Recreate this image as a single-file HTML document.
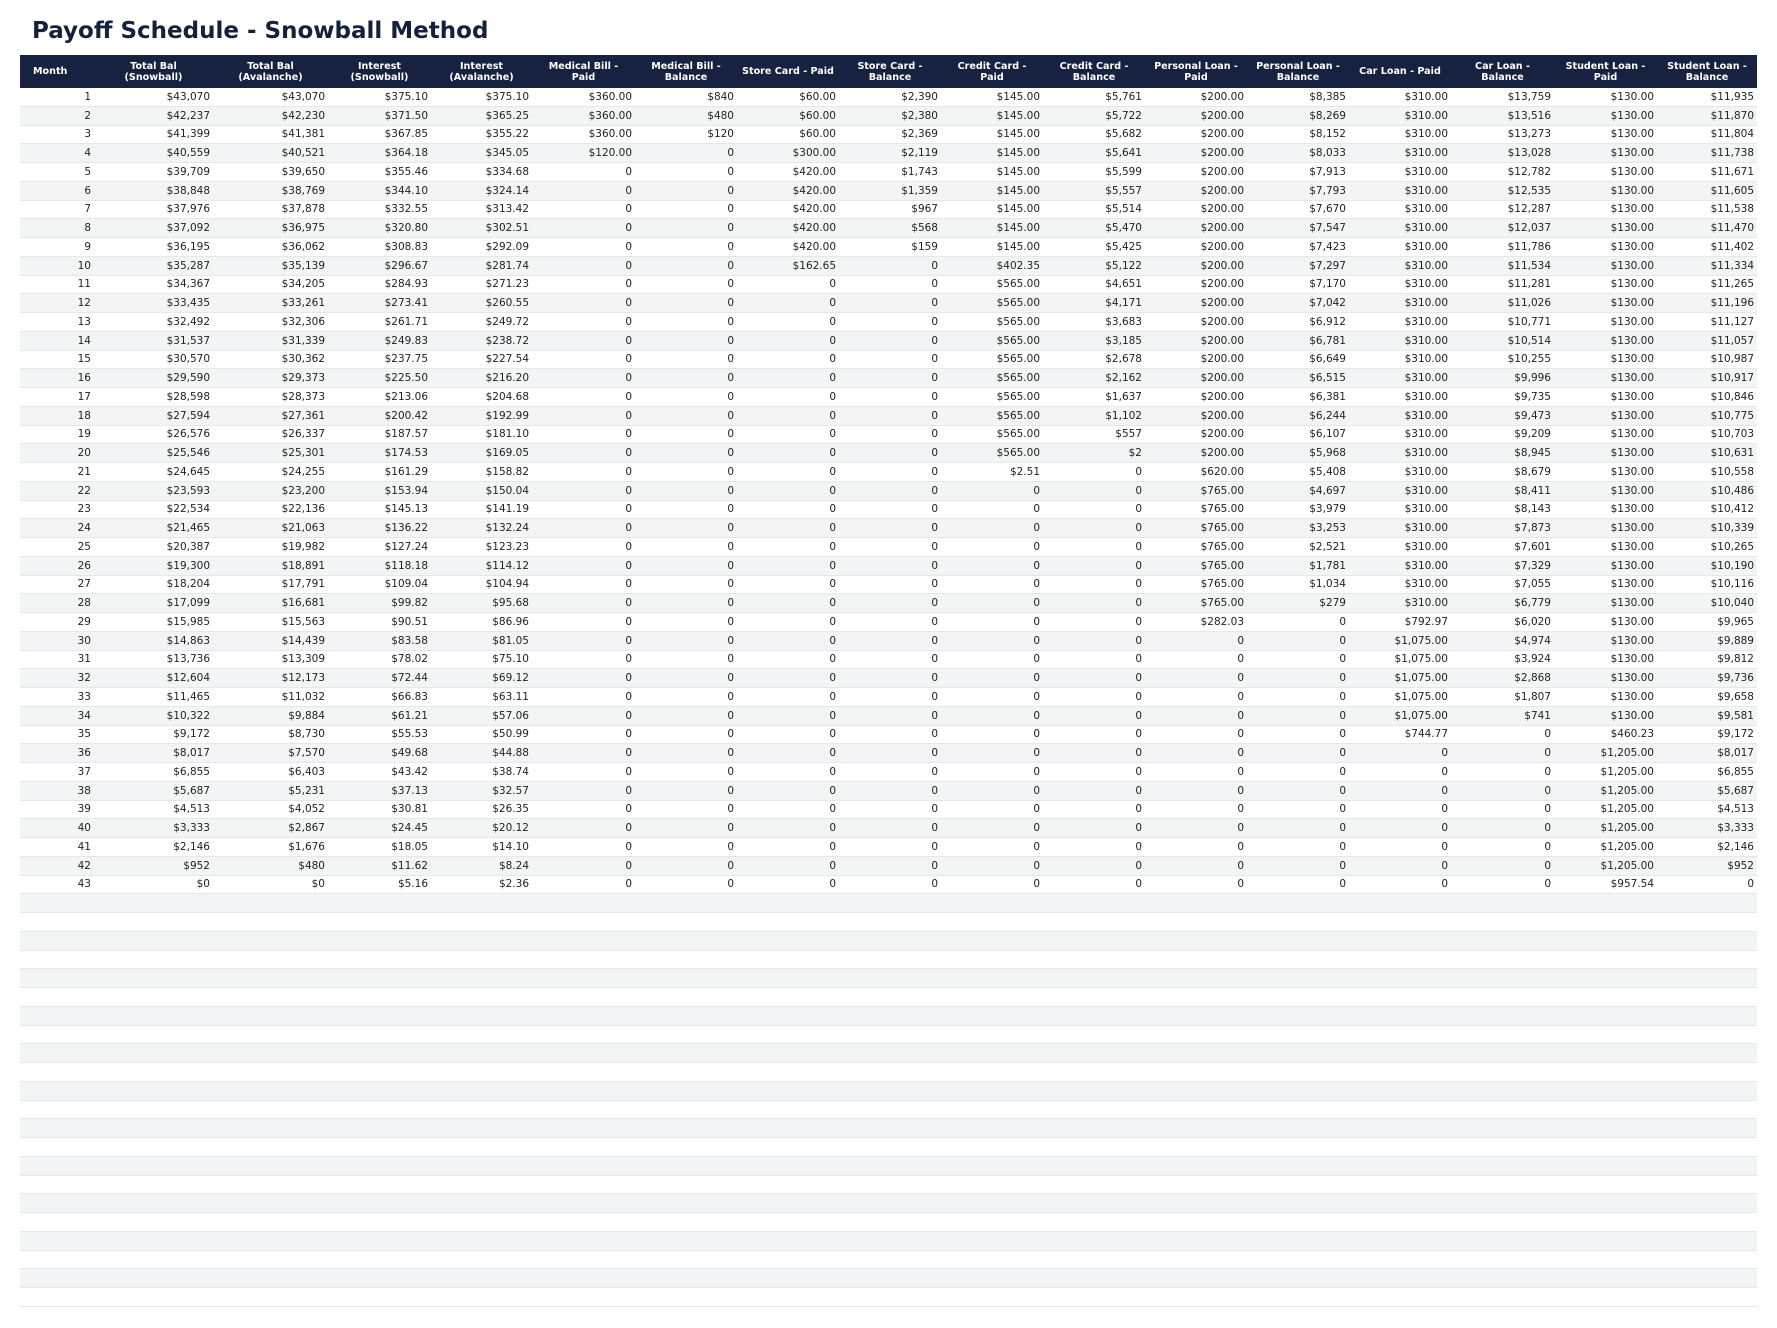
<!DOCTYPE html>
<html><head><meta charset="utf-8"><style>
body{margin:0;background:#fff;font-family:"DejaVu Sans","Liberation Sans",sans-serif;}
h1{position:absolute;left:32px;top:18px;margin:0;font-size:23px;font-weight:bold;color:#14213d;}
table{position:absolute;left:20px;top:55px;width:1737px;border-collapse:collapse;table-layout:fixed;}
th{background:#16223f;color:#fff;font-size:9.6px;font-weight:bold;height:33px;padding:0 2px;text-align:center;line-height:11px;}
th.m{text-align:left;padding-left:13px;}
td{font-size:10.5px;color:#222;text-align:right;padding:0 3px 0 0;height:17.75px;border-bottom:1px solid #e5e7eb;white-space:nowrap;overflow:hidden;}
tbody tr:nth-child(even) td{background:#f3f4f6;}
</style></head><body>
<h1>Payoff Schedule - Snowball Method</h1>
<table>
<colgroup><col style="width:74px"><col style="width:119px"><col style="width:115px"><col style="width:103px"><col style="width:101px"><col style="width:103px"><col style="width:102px"><col style="width:102px"><col style="width:102px"><col style="width:102px"><col style="width:102px"><col style="width:102px"><col style="width:102px"><col style="width:102px"><col style="width:103px"><col style="width:103px"></colgroup>
<thead><tr><th class="m">Month</th><th>Total Bal<br>(Snowball)</th><th>Total Bal<br>(Avalanche)</th><th>Interest<br>(Snowball)</th><th>Interest<br>(Avalanche)</th><th>Medical Bill -<br>Paid</th><th>Medical Bill -<br>Balance</th><th>Store Card - Paid</th><th>Store Card -<br>Balance</th><th>Credit Card -<br>Paid</th><th>Credit Card -<br>Balance</th><th>Personal Loan -<br>Paid</th><th>Personal Loan -<br>Balance</th><th>Car Loan - Paid</th><th>Car Loan -<br>Balance</th><th>Student Loan -<br>Paid</th><th>Student Loan -<br>Balance</th></tr></thead>
<tbody>
<tr><td>1</td><td>$43,070</td><td>$43,070</td><td>$375.10</td><td>$375.10</td><td>$360.00</td><td>$840</td><td>$60.00</td><td>$2,390</td><td>$145.00</td><td>$5,761</td><td>$200.00</td><td>$8,385</td><td>$310.00</td><td>$13,759</td><td>$130.00</td><td>$11,935</td></tr>
<tr><td>2</td><td>$42,237</td><td>$42,230</td><td>$371.50</td><td>$365.25</td><td>$360.00</td><td>$480</td><td>$60.00</td><td>$2,380</td><td>$145.00</td><td>$5,722</td><td>$200.00</td><td>$8,269</td><td>$310.00</td><td>$13,516</td><td>$130.00</td><td>$11,870</td></tr>
<tr><td>3</td><td>$41,399</td><td>$41,381</td><td>$367.85</td><td>$355.22</td><td>$360.00</td><td>$120</td><td>$60.00</td><td>$2,369</td><td>$145.00</td><td>$5,682</td><td>$200.00</td><td>$8,152</td><td>$310.00</td><td>$13,273</td><td>$130.00</td><td>$11,804</td></tr>
<tr><td>4</td><td>$40,559</td><td>$40,521</td><td>$364.18</td><td>$345.05</td><td>$120.00</td><td>0</td><td>$300.00</td><td>$2,119</td><td>$145.00</td><td>$5,641</td><td>$200.00</td><td>$8,033</td><td>$310.00</td><td>$13,028</td><td>$130.00</td><td>$11,738</td></tr>
<tr><td>5</td><td>$39,709</td><td>$39,650</td><td>$355.46</td><td>$334.68</td><td>0</td><td>0</td><td>$420.00</td><td>$1,743</td><td>$145.00</td><td>$5,599</td><td>$200.00</td><td>$7,913</td><td>$310.00</td><td>$12,782</td><td>$130.00</td><td>$11,671</td></tr>
<tr><td>6</td><td>$38,848</td><td>$38,769</td><td>$344.10</td><td>$324.14</td><td>0</td><td>0</td><td>$420.00</td><td>$1,359</td><td>$145.00</td><td>$5,557</td><td>$200.00</td><td>$7,793</td><td>$310.00</td><td>$12,535</td><td>$130.00</td><td>$11,605</td></tr>
<tr><td>7</td><td>$37,976</td><td>$37,878</td><td>$332.55</td><td>$313.42</td><td>0</td><td>0</td><td>$420.00</td><td>$967</td><td>$145.00</td><td>$5,514</td><td>$200.00</td><td>$7,670</td><td>$310.00</td><td>$12,287</td><td>$130.00</td><td>$11,538</td></tr>
<tr><td>8</td><td>$37,092</td><td>$36,975</td><td>$320.80</td><td>$302.51</td><td>0</td><td>0</td><td>$420.00</td><td>$568</td><td>$145.00</td><td>$5,470</td><td>$200.00</td><td>$7,547</td><td>$310.00</td><td>$12,037</td><td>$130.00</td><td>$11,470</td></tr>
<tr><td>9</td><td>$36,195</td><td>$36,062</td><td>$308.83</td><td>$292.09</td><td>0</td><td>0</td><td>$420.00</td><td>$159</td><td>$145.00</td><td>$5,425</td><td>$200.00</td><td>$7,423</td><td>$310.00</td><td>$11,786</td><td>$130.00</td><td>$11,402</td></tr>
<tr><td>10</td><td>$35,287</td><td>$35,139</td><td>$296.67</td><td>$281.74</td><td>0</td><td>0</td><td>$162.65</td><td>0</td><td>$402.35</td><td>$5,122</td><td>$200.00</td><td>$7,297</td><td>$310.00</td><td>$11,534</td><td>$130.00</td><td>$11,334</td></tr>
<tr><td>11</td><td>$34,367</td><td>$34,205</td><td>$284.93</td><td>$271.23</td><td>0</td><td>0</td><td>0</td><td>0</td><td>$565.00</td><td>$4,651</td><td>$200.00</td><td>$7,170</td><td>$310.00</td><td>$11,281</td><td>$130.00</td><td>$11,265</td></tr>
<tr><td>12</td><td>$33,435</td><td>$33,261</td><td>$273.41</td><td>$260.55</td><td>0</td><td>0</td><td>0</td><td>0</td><td>$565.00</td><td>$4,171</td><td>$200.00</td><td>$7,042</td><td>$310.00</td><td>$11,026</td><td>$130.00</td><td>$11,196</td></tr>
<tr><td>13</td><td>$32,492</td><td>$32,306</td><td>$261.71</td><td>$249.72</td><td>0</td><td>0</td><td>0</td><td>0</td><td>$565.00</td><td>$3,683</td><td>$200.00</td><td>$6,912</td><td>$310.00</td><td>$10,771</td><td>$130.00</td><td>$11,127</td></tr>
<tr><td>14</td><td>$31,537</td><td>$31,339</td><td>$249.83</td><td>$238.72</td><td>0</td><td>0</td><td>0</td><td>0</td><td>$565.00</td><td>$3,185</td><td>$200.00</td><td>$6,781</td><td>$310.00</td><td>$10,514</td><td>$130.00</td><td>$11,057</td></tr>
<tr><td>15</td><td>$30,570</td><td>$30,362</td><td>$237.75</td><td>$227.54</td><td>0</td><td>0</td><td>0</td><td>0</td><td>$565.00</td><td>$2,678</td><td>$200.00</td><td>$6,649</td><td>$310.00</td><td>$10,255</td><td>$130.00</td><td>$10,987</td></tr>
<tr><td>16</td><td>$29,590</td><td>$29,373</td><td>$225.50</td><td>$216.20</td><td>0</td><td>0</td><td>0</td><td>0</td><td>$565.00</td><td>$2,162</td><td>$200.00</td><td>$6,515</td><td>$310.00</td><td>$9,996</td><td>$130.00</td><td>$10,917</td></tr>
<tr><td>17</td><td>$28,598</td><td>$28,373</td><td>$213.06</td><td>$204.68</td><td>0</td><td>0</td><td>0</td><td>0</td><td>$565.00</td><td>$1,637</td><td>$200.00</td><td>$6,381</td><td>$310.00</td><td>$9,735</td><td>$130.00</td><td>$10,846</td></tr>
<tr><td>18</td><td>$27,594</td><td>$27,361</td><td>$200.42</td><td>$192.99</td><td>0</td><td>0</td><td>0</td><td>0</td><td>$565.00</td><td>$1,102</td><td>$200.00</td><td>$6,244</td><td>$310.00</td><td>$9,473</td><td>$130.00</td><td>$10,775</td></tr>
<tr><td>19</td><td>$26,576</td><td>$26,337</td><td>$187.57</td><td>$181.10</td><td>0</td><td>0</td><td>0</td><td>0</td><td>$565.00</td><td>$557</td><td>$200.00</td><td>$6,107</td><td>$310.00</td><td>$9,209</td><td>$130.00</td><td>$10,703</td></tr>
<tr><td>20</td><td>$25,546</td><td>$25,301</td><td>$174.53</td><td>$169.05</td><td>0</td><td>0</td><td>0</td><td>0</td><td>$565.00</td><td>$2</td><td>$200.00</td><td>$5,968</td><td>$310.00</td><td>$8,945</td><td>$130.00</td><td>$10,631</td></tr>
<tr><td>21</td><td>$24,645</td><td>$24,255</td><td>$161.29</td><td>$158.82</td><td>0</td><td>0</td><td>0</td><td>0</td><td>$2.51</td><td>0</td><td>$620.00</td><td>$5,408</td><td>$310.00</td><td>$8,679</td><td>$130.00</td><td>$10,558</td></tr>
<tr><td>22</td><td>$23,593</td><td>$23,200</td><td>$153.94</td><td>$150.04</td><td>0</td><td>0</td><td>0</td><td>0</td><td>0</td><td>0</td><td>$765.00</td><td>$4,697</td><td>$310.00</td><td>$8,411</td><td>$130.00</td><td>$10,486</td></tr>
<tr><td>23</td><td>$22,534</td><td>$22,136</td><td>$145.13</td><td>$141.19</td><td>0</td><td>0</td><td>0</td><td>0</td><td>0</td><td>0</td><td>$765.00</td><td>$3,979</td><td>$310.00</td><td>$8,143</td><td>$130.00</td><td>$10,412</td></tr>
<tr><td>24</td><td>$21,465</td><td>$21,063</td><td>$136.22</td><td>$132.24</td><td>0</td><td>0</td><td>0</td><td>0</td><td>0</td><td>0</td><td>$765.00</td><td>$3,253</td><td>$310.00</td><td>$7,873</td><td>$130.00</td><td>$10,339</td></tr>
<tr><td>25</td><td>$20,387</td><td>$19,982</td><td>$127.24</td><td>$123.23</td><td>0</td><td>0</td><td>0</td><td>0</td><td>0</td><td>0</td><td>$765.00</td><td>$2,521</td><td>$310.00</td><td>$7,601</td><td>$130.00</td><td>$10,265</td></tr>
<tr><td>26</td><td>$19,300</td><td>$18,891</td><td>$118.18</td><td>$114.12</td><td>0</td><td>0</td><td>0</td><td>0</td><td>0</td><td>0</td><td>$765.00</td><td>$1,781</td><td>$310.00</td><td>$7,329</td><td>$130.00</td><td>$10,190</td></tr>
<tr><td>27</td><td>$18,204</td><td>$17,791</td><td>$109.04</td><td>$104.94</td><td>0</td><td>0</td><td>0</td><td>0</td><td>0</td><td>0</td><td>$765.00</td><td>$1,034</td><td>$310.00</td><td>$7,055</td><td>$130.00</td><td>$10,116</td></tr>
<tr><td>28</td><td>$17,099</td><td>$16,681</td><td>$99.82</td><td>$95.68</td><td>0</td><td>0</td><td>0</td><td>0</td><td>0</td><td>0</td><td>$765.00</td><td>$279</td><td>$310.00</td><td>$6,779</td><td>$130.00</td><td>$10,040</td></tr>
<tr><td>29</td><td>$15,985</td><td>$15,563</td><td>$90.51</td><td>$86.96</td><td>0</td><td>0</td><td>0</td><td>0</td><td>0</td><td>0</td><td>$282.03</td><td>0</td><td>$792.97</td><td>$6,020</td><td>$130.00</td><td>$9,965</td></tr>
<tr><td>30</td><td>$14,863</td><td>$14,439</td><td>$83.58</td><td>$81.05</td><td>0</td><td>0</td><td>0</td><td>0</td><td>0</td><td>0</td><td>0</td><td>0</td><td>$1,075.00</td><td>$4,974</td><td>$130.00</td><td>$9,889</td></tr>
<tr><td>31</td><td>$13,736</td><td>$13,309</td><td>$78.02</td><td>$75.10</td><td>0</td><td>0</td><td>0</td><td>0</td><td>0</td><td>0</td><td>0</td><td>0</td><td>$1,075.00</td><td>$3,924</td><td>$130.00</td><td>$9,812</td></tr>
<tr><td>32</td><td>$12,604</td><td>$12,173</td><td>$72.44</td><td>$69.12</td><td>0</td><td>0</td><td>0</td><td>0</td><td>0</td><td>0</td><td>0</td><td>0</td><td>$1,075.00</td><td>$2,868</td><td>$130.00</td><td>$9,736</td></tr>
<tr><td>33</td><td>$11,465</td><td>$11,032</td><td>$66.83</td><td>$63.11</td><td>0</td><td>0</td><td>0</td><td>0</td><td>0</td><td>0</td><td>0</td><td>0</td><td>$1,075.00</td><td>$1,807</td><td>$130.00</td><td>$9,658</td></tr>
<tr><td>34</td><td>$10,322</td><td>$9,884</td><td>$61.21</td><td>$57.06</td><td>0</td><td>0</td><td>0</td><td>0</td><td>0</td><td>0</td><td>0</td><td>0</td><td>$1,075.00</td><td>$741</td><td>$130.00</td><td>$9,581</td></tr>
<tr><td>35</td><td>$9,172</td><td>$8,730</td><td>$55.53</td><td>$50.99</td><td>0</td><td>0</td><td>0</td><td>0</td><td>0</td><td>0</td><td>0</td><td>0</td><td>$744.77</td><td>0</td><td>$460.23</td><td>$9,172</td></tr>
<tr><td>36</td><td>$8,017</td><td>$7,570</td><td>$49.68</td><td>$44.88</td><td>0</td><td>0</td><td>0</td><td>0</td><td>0</td><td>0</td><td>0</td><td>0</td><td>0</td><td>0</td><td>$1,205.00</td><td>$8,017</td></tr>
<tr><td>37</td><td>$6,855</td><td>$6,403</td><td>$43.42</td><td>$38.74</td><td>0</td><td>0</td><td>0</td><td>0</td><td>0</td><td>0</td><td>0</td><td>0</td><td>0</td><td>0</td><td>$1,205.00</td><td>$6,855</td></tr>
<tr><td>38</td><td>$5,687</td><td>$5,231</td><td>$37.13</td><td>$32.57</td><td>0</td><td>0</td><td>0</td><td>0</td><td>0</td><td>0</td><td>0</td><td>0</td><td>0</td><td>0</td><td>$1,205.00</td><td>$5,687</td></tr>
<tr><td>39</td><td>$4,513</td><td>$4,052</td><td>$30.81</td><td>$26.35</td><td>0</td><td>0</td><td>0</td><td>0</td><td>0</td><td>0</td><td>0</td><td>0</td><td>0</td><td>0</td><td>$1,205.00</td><td>$4,513</td></tr>
<tr><td>40</td><td>$3,333</td><td>$2,867</td><td>$24.45</td><td>$20.12</td><td>0</td><td>0</td><td>0</td><td>0</td><td>0</td><td>0</td><td>0</td><td>0</td><td>0</td><td>0</td><td>$1,205.00</td><td>$3,333</td></tr>
<tr><td>41</td><td>$2,146</td><td>$1,676</td><td>$18.05</td><td>$14.10</td><td>0</td><td>0</td><td>0</td><td>0</td><td>0</td><td>0</td><td>0</td><td>0</td><td>0</td><td>0</td><td>$1,205.00</td><td>$2,146</td></tr>
<tr><td>42</td><td>$952</td><td>$480</td><td>$11.62</td><td>$8.24</td><td>0</td><td>0</td><td>0</td><td>0</td><td>0</td><td>0</td><td>0</td><td>0</td><td>0</td><td>0</td><td>$1,205.00</td><td>$952</td></tr>
<tr><td>43</td><td>$0</td><td>$0</td><td>$5.16</td><td>$2.36</td><td>0</td><td>0</td><td>0</td><td>0</td><td>0</td><td>0</td><td>0</td><td>0</td><td>0</td><td>0</td><td>$957.54</td><td>0</td></tr>
<tr><td colspan="17">&nbsp;</td></tr><tr><td colspan="17">&nbsp;</td></tr><tr><td colspan="17">&nbsp;</td></tr><tr><td colspan="17">&nbsp;</td></tr><tr><td colspan="17">&nbsp;</td></tr><tr><td colspan="17">&nbsp;</td></tr><tr><td colspan="17">&nbsp;</td></tr><tr><td colspan="17">&nbsp;</td></tr><tr><td colspan="17">&nbsp;</td></tr><tr><td colspan="17">&nbsp;</td></tr><tr><td colspan="17">&nbsp;</td></tr>
<tr><td colspan="17">&nbsp;</td></tr><tr><td colspan="17">&nbsp;</td></tr><tr><td colspan="17">&nbsp;</td></tr><tr><td colspan="17">&nbsp;</td></tr><tr><td colspan="17">&nbsp;</td></tr><tr><td colspan="17">&nbsp;</td></tr><tr><td colspan="17">&nbsp;</td></tr><tr><td colspan="17">&nbsp;</td></tr><tr><td colspan="17">&nbsp;</td></tr><tr><td colspan="17">&nbsp;</td></tr><tr><td colspan="17">&nbsp;</td></tr>
</tbody></table>
</body></html>
